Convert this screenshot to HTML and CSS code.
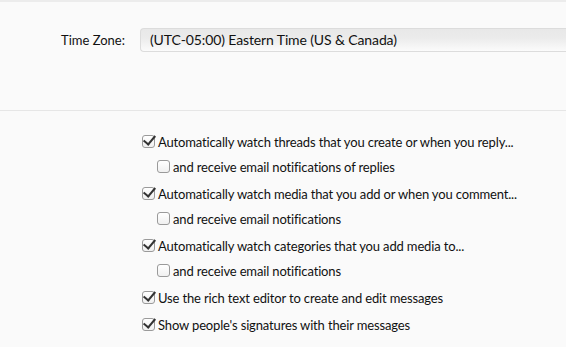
FILE: index.html
```html
<!DOCTYPE html>
<html>
<head>
<meta charset="utf-8">
<link rel="stylesheet" href="styles.css">
</head>
<body>
<div class="page">
  <div class="row tz">
    <label class="label">Time Zone:</label>
    <div class="select">(UTC-05:00) Eastern Time (US &amp; Canada)</div>
  </div>
  <div class="sep"></div>
  <ul class="opts">
    <li class="opt"><span class="cb on"></span>Automatically watch threads that you create or when you reply...</li>
    <li class="opt sub"><span class="cb"></span>and receive email notifications of replies</li>
    <li class="opt"><span class="cb on"></span>Automatically watch media that you add or when you comment...</li>
    <li class="opt sub"><span class="cb"></span>and receive email notifications</li>
    <li class="opt"><span class="cb on"></span>Automatically watch categories that you add media to...</li>
    <li class="opt sub"><span class="cb"></span>and receive email notifications</li>
    <li class="opt"><span class="cb on"></span>Use the rich text editor to create and edit messages</li>
    <li class="opt"><span class="cb on"></span>Show people's signatures with their messages</li>
  </ul>
</div>
</body>
</html>
```
FILE: styles.css
```css
html, body { margin: 0; padding: 0; }
body {
  background: #fafafa;
  font-family: "Lato", "Liberation Sans", sans-serif;
  font-size: 13px;
  color: #111;
  width: 566px;
  height: 347px;
  overflow: hidden;
}
.page {
  border-top: 2px solid #ececec;
}
.tz {
  display: flex;
  align-items: center;
  padding-top: 26px;
  height: 24px;
}
.label {
  width: 125px;
  text-align: right;
  flex: none;
}
.select {
  margin-left: 15px;
  flex: 1;
  height: 22px;
  line-height: 22px;
  padding-left: 9px;
  border: 1px solid #dcdcdc;
  border-right: none;
  border-radius: 4px 0 0 4px;
  background: linear-gradient(#e8e8e8, #ebebeb 40%, #fbfbfb);
  font-size: 14px;
  letter-spacing: -0.12px;
}
.sep {
  margin-top: 58px;
  border-top: 1px solid #e6e6e6;
}
.opts {
  list-style: none;
  margin: 0;
  padding: 16px 0 0 142px;
  letter-spacing: -0.15px;
}
.opt {
  display: flex;
  align-items: center;
  height: 25px;
  padding-top: 2px;
}
.opt.sub {
  padding-top: 0;
  padding-left: 15px;
}
.cb {
  width: 11px;
  height: 11px;
  border: 1px solid #9a9a9a;
  border-radius: 3px;
  background: linear-gradient(#fff, #f0f0f0);
  margin-right: 3px;
  position: relative;
  flex: none;
}
.cb.on::after {
  content: "";
  position: absolute;
  left: 3px;
  top: -3px;
  width: 5px;
  height: 10px;
  border: solid #333;
  border-width: 0 2px 2px 0;
  transform: rotate(40deg);
}
```
